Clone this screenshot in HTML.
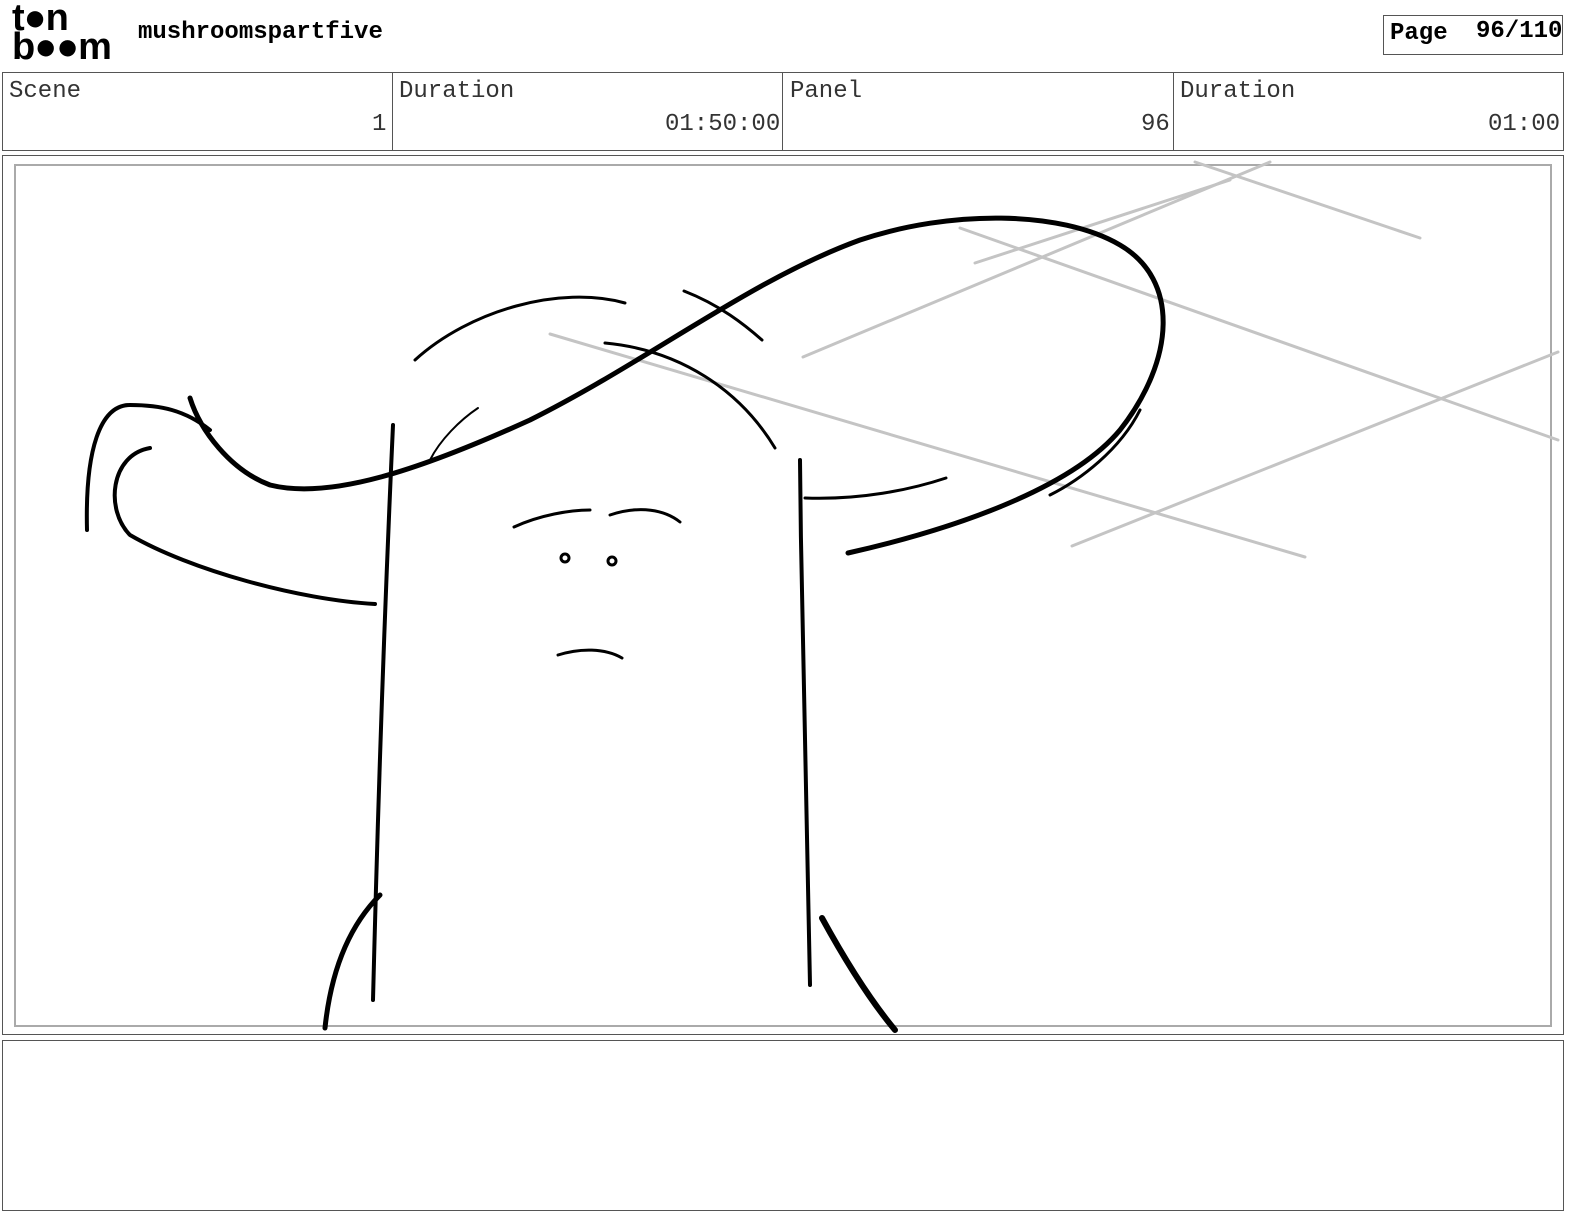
<!DOCTYPE html>
<html><head><meta charset="utf-8"><style>
body{margin:0;width:1584px;height:1224px;background:#fff;position:relative;overflow:hidden;font-family:"Liberation Mono",monospace;}
.a{position:absolute}
.box{position:absolute;border:1px solid #555;box-sizing:border-box}
.lbl{position:absolute;font-size:24px;color:#333}
</style></head><body>
<div class="a" style="left:12px;top:4px;font:bold 38px/29px 'Liberation Sans',sans-serif;letter-spacing:-1px">t●n<br>b●●m</div>
<div class="a" style="left:138px;top:19px;font-weight:bold;font-size:24px">mushroomspartfive</div>
<div class="box" style="left:1383px;top:15px;width:180px;height:40px"></div>
<div class="a" style="left:1390px;top:20px;font-weight:bold;font-size:24px">Page</div>
<div class="a" style="left:1476px;top:18px;font-weight:bold;font-size:24px">96/110</div>
<div class="box" style="left:2px;top:72px;width:1562px;height:79px"></div>
<div class="a" style="left:392px;top:72px;width:1px;height:79px;background:#555"></div>
<div class="a" style="left:782px;top:72px;width:1px;height:79px;background:#555"></div>
<div class="a" style="left:1173px;top:72px;width:1px;height:79px;background:#555"></div>
<div class="lbl" style="left:9px;top:78px">Scene</div>
<div class="lbl" style="left:399px;top:78px">Duration</div>
<div class="lbl" style="left:790px;top:78px">Panel</div>
<div class="lbl" style="left:1180px;top:78px">Duration</div>
<div class="lbl" style="left:372px;top:111px">1</div>
<div class="lbl" style="left:665px;top:111px">01:50:00</div>
<div class="lbl" style="left:1141px;top:111px">96</div>
<div class="lbl" style="left:1488px;top:111px">01:00</div>
<div class="box" style="left:2px;top:155px;width:1562px;height:880px"></div>
<div class="box" style="left:14px;top:164px;width:1538px;height:863px;border:2px solid #aaa"></div>
<div class="box" style="left:2px;top:1040px;width:1562px;height:171px"></div>
<svg class="a" style="left:0;top:0" width="1584" height="1224" fill="none" stroke-linecap="round">
<g stroke="#c4c4c4" stroke-width="3">
<path d="M550 334 L1305 557"/><path d="M960 228 L1558 440"/><path d="M1072 546 L1558 352"/>
<path d="M803 357 L1270 162"/><path d="M1195 162 L1420 238"/><path d="M975 263 L1230 180"/>
</g>
<g stroke="#000" stroke-width="5">
<path d="M190 398 C200 430 230 470 270 485 C330 500 420 470 530 420 C650 360 750 280 860 240 C950 210 1060 210 1120 245 C1180 280 1175 360 1120 430 C1070 490 950 530 848 553"/>
<path d="M87 530 C85 450 100 405 130 405 C160 405 185 410 210 430" stroke-width="4"/>
<path d="M150 448 C110 455 105 510 130 535 C190 570 300 600 375 604" stroke-width="4"/>
<path d="M415 360 C470 310 560 285 625 303" stroke-width="3"/>
<path d="M393 425 C385 600 378 800 373 1000" stroke-width="4"/>
<path d="M800 460 C802 650 806 850 810 985" stroke-width="4"/>
<path d="M805 498 C860 500 910 490 946 478" stroke-width="3"/>
<path d="M605 343 C680 350 740 390 775 448" stroke-width="3"/>
<path d="M684 291 C720 305 745 325 762 340" stroke-width="3"/>
<path d="M430 460 C440 440 460 420 478 408" stroke-width="2"/>
<path d="M1140 410 C1120 450 1080 480 1050 495" stroke-width="3"/>
<path d="M380 895 C345 930 330 980 325 1028" stroke-width="5"/>
<path d="M822 918 C845 960 870 1000 895 1030" stroke-width="6"/>
<path d="M514 527 C540 515 570 510 590 510" stroke-width="3"/>
<path d="M610 515 C640 505 665 510 680 522" stroke-width="3"/>
<path d="M558 655 C580 648 605 648 622 658" stroke-width="3"/>
<circle cx="565" cy="558" r="4" stroke-width="3"/><circle cx="612" cy="561" r="4" stroke-width="3"/>
</g></svg>
</body></html>
